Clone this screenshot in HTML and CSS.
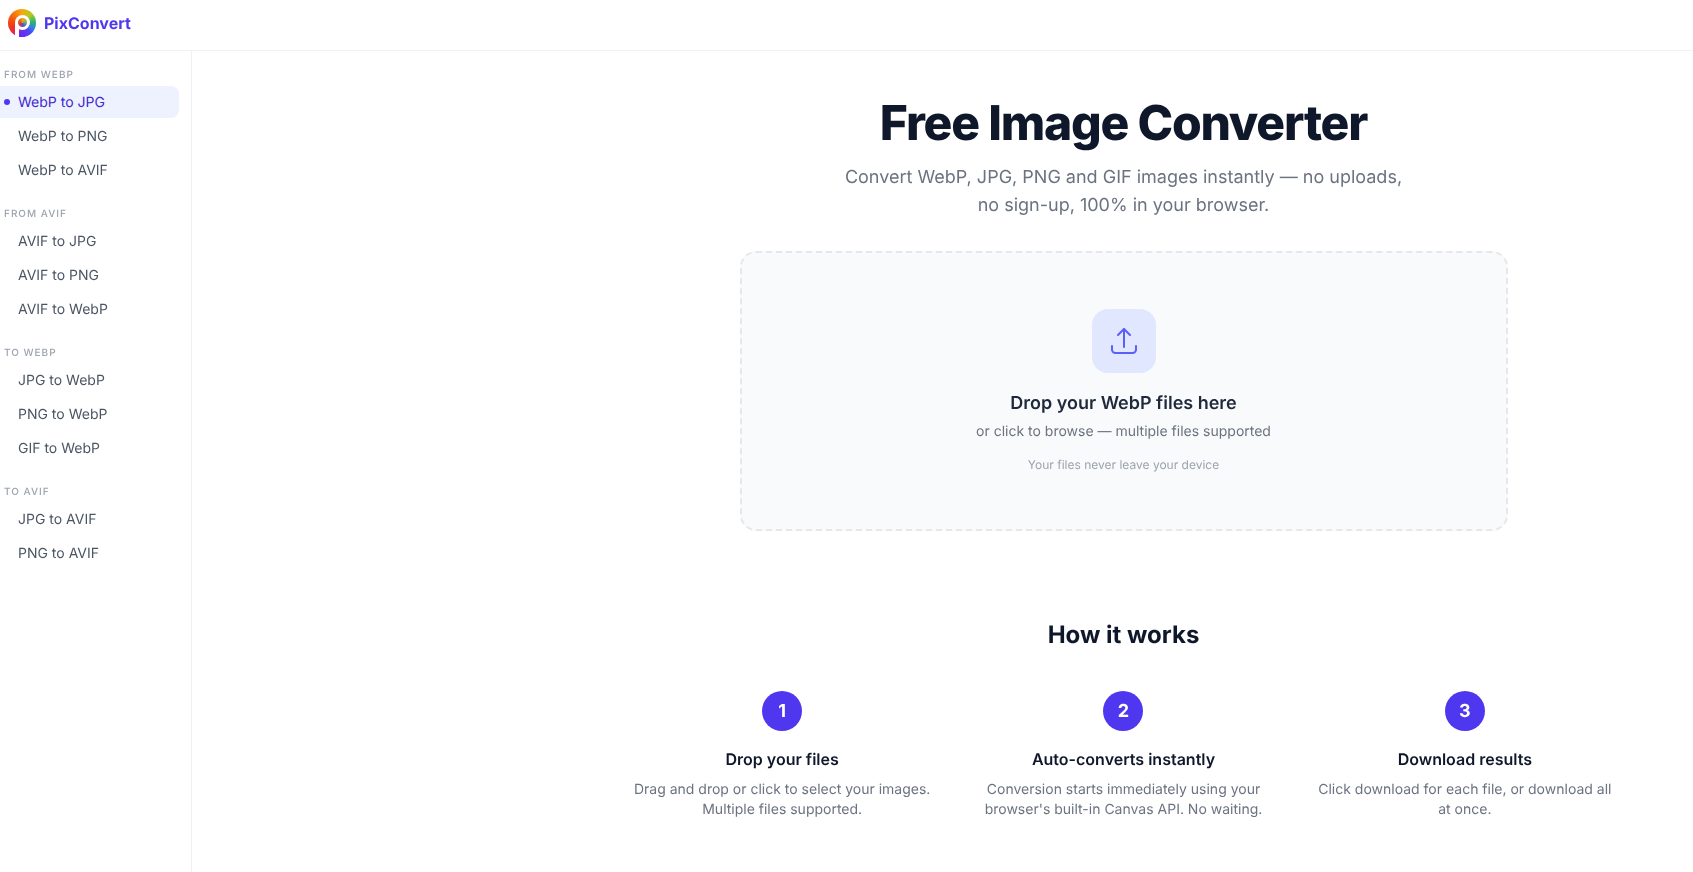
FILE: index.html
```html
<!DOCTYPE html>
<html lang="en">
<head>
    <meta charset="utf-8">
    <meta name="viewport" content="width=device-width, initial-scale=1">
    <title>PixConvert - Free Image Converter</title>
    <link rel="stylesheet" href="styles.css">
</head>
<body>
    <header class="topbar">
        <a href="#" class="brand">
            <span class="brand-logo">
                <span class="logo-tail"></span>
                <span class="logo-dot"></span>
            </span>
            <span class="brand-name">PixConvert</span>
        </a>
    </header>

    <div class="layout">
        <nav class="sidebar">
            <div class="nav-group">
                <div class="nav-label">From WebP</div>
                <a href="#" class="nav-link active">WebP to JPG</a>
                <a href="#" class="nav-link">WebP to PNG</a>
                <a href="#" class="nav-link">WebP to AVIF</a>
            </div>
            <div class="nav-group">
                <div class="nav-label">From AVIF</div>
                <a href="#" class="nav-link">AVIF to JPG</a>
                <a href="#" class="nav-link">AVIF to PNG</a>
                <a href="#" class="nav-link">AVIF to WebP</a>
            </div>
            <div class="nav-group">
                <div class="nav-label">To WebP</div>
                <a href="#" class="nav-link">JPG to WebP</a>
                <a href="#" class="nav-link">PNG to WebP</a>
                <a href="#" class="nav-link">GIF to WebP</a>
            </div>
            <div class="nav-group">
                <div class="nav-label">To AVIF</div>
                <a href="#" class="nav-link">JPG to AVIF</a>
                <a href="#" class="nav-link">PNG to AVIF</a>
            </div>
        </nav>

        <main class="content">
            <section class="hero">
                <h1>Free Image Converter</h1>
                <p>Convert WebP, JPG, PNG and GIF images instantly — no uploads,<br>no sign-up, 100% in your browser.</p>
            </section>

            <section class="dropzone">
                <div class="drop-icon">
                    <svg width="28" height="28" viewBox="0 0 28 28" fill="none" stroke="#5b5ff5" stroke-width="2" stroke-linecap="round" stroke-linejoin="round">
                        <path d="M14 20V2"/>
                        <path d="M8 8l6-6 6 6"/>
                        <path d="M2 19v3.5a3.5 3.5 0 0 0 3.5 3.5h17a3.5 3.5 0 0 0 3.5-3.5V19"/>
                    </svg>
                </div>
                <div class="drop-title">Drop your WebP files here</div>
                <div class="drop-sub">or click to browse — multiple files supported</div>
                <div class="drop-note">Your files never leave your device</div>
            </section>

            <section class="how">
                <h2>How it works</h2>
                <div class="steps">
                    <div class="step">
                        <div class="step-num">1</div>
                        <h3>Drop your files</h3>
                        <p>Drag and drop or click to select your images. Multiple files supported.</p>
                    </div>
                    <div class="step">
                        <div class="step-num">2</div>
                        <h3>Auto-converts instantly</h3>
                        <p>Conversion starts immediately using your browser's built-in Canvas API. No waiting.</p>
                    </div>
                    <div class="step">
                        <div class="step-num">3</div>
                        <h3>Download results</h3>
                        <p>Click download for each file, or download all at once.</p>
                    </div>
                </div>
            </section>
        </main>
    </div>
</body>
</html>
```

FILE: styles.css
```css
:root {
    --font-base: Inter, "Liberation Sans", sans-serif;
    --color-primary: #4f37f0;
    --color-active: #4327d0;
    --color-heading: #0f172a;
    --color-text: #4b5563;
    --color-muted: #6b7280;
    --color-faint: #9ca3af;
    --color-border: #f0f1f3;
}

* {
    box-sizing: border-box;
}

html, body {
    height: 100%;
}

body {
    margin: 0;
    font-family: var(--font-base);
    background: #ffffff;
    color: var(--color-heading);
    overflow: hidden;
    text-rendering: geometricPrecision;
}

a {
    text-decoration: none;
}

.topbar {
    height: 51px;
    display: flex;
    align-items: center;
    padding: 0 8px 5px;
    border-bottom: 1px solid var(--color-border);
    will-change: opacity;
}

.brand {
    display: flex;
    align-items: center;
    gap: 8px;
}

/* logo is a conic ring with a white hole and a white slot for the P stem */
.brand-logo {
    position: relative;
    width: 28px;
    height: 28px;
    border-radius: 50%;
    background: conic-gradient(#f7a80c 0deg, #b5cb1e 45deg, #2cb56a 85deg, #2f80ee 115deg, #4f46f0 140deg, #6a2cf0 180deg, #e0206a 205deg, #f0351c 250deg, #f4540f 290deg, #f98a0a 335deg, #f7a80c 360deg);
}

.brand-logo::before {
    content: "";
    position: absolute;
    left: 6.5px;
    top: 6.5px;
    width: 15px;
    height: 15px;
    border-radius: 50%;
    background: #ffffff;
}

.brand-logo::after {
    content: "";
    position: absolute;
    left: 7px;
    top: 14px;
    width: 3.5px;
    height: 14px;
    background: #ffffff;
}

.logo-tail {
    position: absolute;
    left: 10.5px;
    top: 23px;
    width: 6px;
    height: 5px;
    background: #6a2cf0;
}

.logo-dot {
    position: absolute;
    z-index: 1;
    left: 9.5px;
    top: 9.5px;
    width: 9px;
    height: 9px;
    border-radius: 50%;
    background: conic-gradient(#f0a020 0deg, #8cc03a 70deg, #4a55e0 160deg, #d03a50 230deg, #f0701a 320deg, #f0a020 360deg);
}

.brand-name {
    font-size: 16px;
    font-weight: 700;
    color: var(--color-primary);
}

.layout {
    display: flex;
    height: calc(100% - 51px);
    will-change: opacity;
}

.sidebar {
    width: 192px;
    flex-shrink: 0;
    padding: 17px 12px 0 0;
    border-right: 1px solid var(--color-border);
}

.nav-group {
    margin-bottom: 21px;
}

.nav-label {
    padding: 0 4px;
    margin-bottom: 3px;
    font-size: 10px;
    line-height: 15px;
    font-weight: 500;
    letter-spacing: 0.1em;
    text-transform: uppercase;
    color: var(--color-faint);
}

.nav-link {
    display: flex;
    align-items: center;
    height: 32px;
    margin-bottom: 2px;
    padding-left: 18px;
    border-radius: 0 8px 8px 0;
    font-size: 14px;
    color: var(--color-text);
    position: relative;
}

.nav-link:last-child {
    margin-bottom: 0;
}

.nav-link.active {
    background: #eef2ff;
    color: var(--color-active);
}

.nav-link.active::before {
    content: "";
    position: absolute;
    left: 4px;
    top: 13px;
    width: 6px;
    height: 6px;
    border-radius: 50%;
    background: var(--color-primary);
}

.content {
    flex: 1;
    padding: 42px 0 0 362px;
    display: flex;
    flex-direction: column;
    align-items: center;
}

.hero {
    text-align: center;
}

.hero h1 {
    margin: 0;
    font-size: 48px;
    line-height: 60px;
    font-weight: 800;
    letter-spacing: -0.025em;
    color: var(--color-heading);
}

.hero p {
    margin: 11px 0 0;
    font-size: 18px;
    line-height: 28px;
    color: var(--color-muted);
}

.dropzone {
    width: 768px;
    height: 280px;
    margin-top: 31px;
    padding-top: 56px;
    display: flex;
    flex-direction: column;
    align-items: center;
    background: #f9fafb;
    border: 2px dashed #e5e7eb;
    border-radius: 16px;
}

.drop-icon {
    width: 64px;
    height: 64px;
    display: flex;
    align-items: center;
    justify-content: center;
    background: #e0e7ff;
    border-radius: 16px;
}

.drop-title {
    margin-top: 17px;
    font-size: 18px;
    line-height: 28px;
    font-weight: 600;
    color: #1e293b;
}

.drop-sub {
    margin-top: 4px;
    font-size: 14px;
    line-height: 20px;
    color: var(--color-muted);
}

.drop-note {
    margin-top: 15px;
    font-size: 12px;
    line-height: 16px;
    color: var(--color-faint);
}

.how {
    width: 100%;
    margin-top: 88px;
    text-align: center;
}

.how h2 {
    margin: 0;
    font-size: 24px;
    line-height: 32px;
    font-weight: 700;
}

.steps {
    display: grid;
    grid-template-columns: repeat(3, 1fr);
    width: 1024px;
    margin: 40px auto 0;
}

.step {
    display: flex;
    flex-direction: column;
    align-items: center;
    padding: 0 16px;
}

.step-num {
    width: 40px;
    height: 40px;
    display: flex;
    align-items: center;
    justify-content: center;
    border-radius: 50%;
    background: var(--color-primary);
    color: #ffffff;
    font-size: 18px;
    font-weight: 700;
}

.step h3 {
    margin: 16px 0 9px;
    font-size: 16px;
    line-height: 24px;
    font-weight: 600;
}

.step p {
    margin: 0;
    font-size: 14px;
    line-height: 20px;
    color: var(--color-muted);
}
```
